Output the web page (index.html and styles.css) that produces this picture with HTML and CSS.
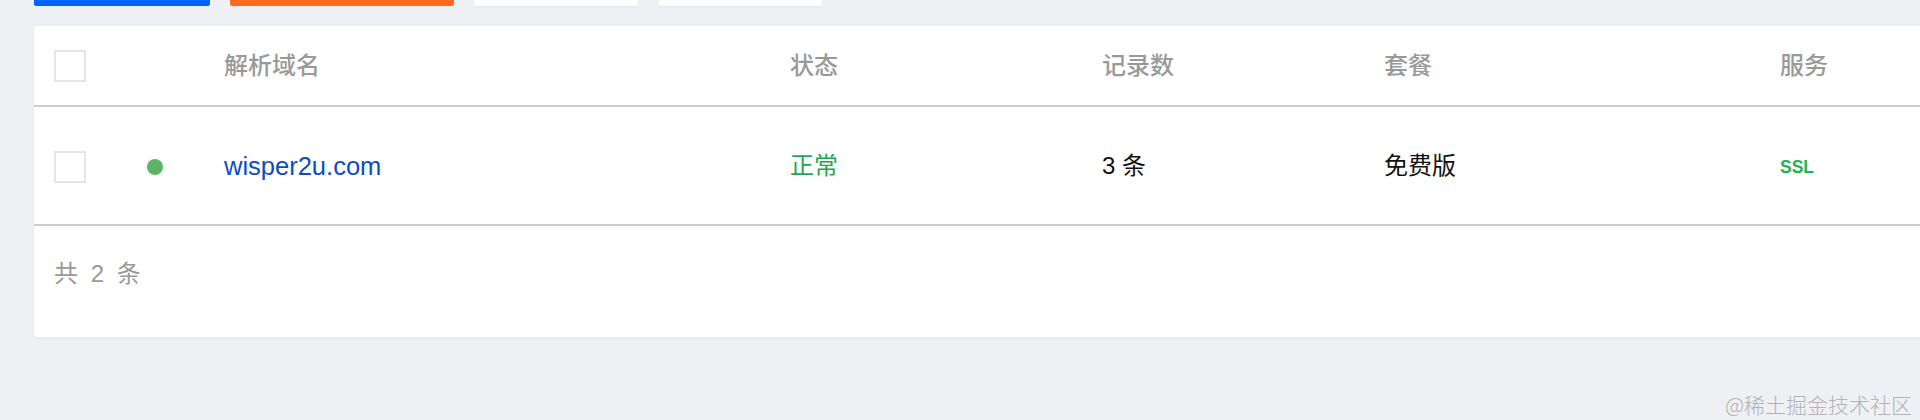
FILE: index.html
```html
<!DOCTYPE html>
<html lang="zh-CN">
<head>
<meta charset="utf-8">
<title>域名解析列表</title>
<link rel="stylesheet" href="styles.css">
</head>
<body>
<div class="page">
  <div class="toolbar">
    <button class="btn btn-primary"></button>
    <button class="btn btn-warn"></button>
    <button class="btn btn-plain"></button>
    <button class="btn btn-plain"></button>
  </div>
  <div class="card">
    <div class="row head">
      <div class="cell"><span class="checkbox"></span></div>
      <div class="cell"></div>
      <div class="cell">解析域名</div>
      <div class="cell">状态</div>
      <div class="cell">记录数</div>
      <div class="cell">套餐</div>
      <div class="cell">服务</div>
    </div>
    <div class="row body">
      <div class="cell"><span class="checkbox"></span></div>
      <div class="cell"><span class="dot"></span></div>
      <div class="cell"><a class="domain" href="#">wisper2u.com</a></div>
      <div class="cell status">正常</div>
      <div class="cell">3 条</div>
      <div class="cell">免费版</div>
      <div class="cell"><span class="ssl">SSL</span></div>
    </div>
    <div class="footer">共 2 条</div>
  </div>
</div>
<div class="watermark">@稀土掘金技术社区</div>
</body>
</html>
```
FILE: styles.css
```css
html, body {
  margin: 0;
  padding: 0;
}
body {
  background: #eff0f4;
  width: 1920px;
  height: 420px;
  overflow: hidden;
  position: relative;
  font-family: "Liberation Sans", "Noto Sans CJK SC", sans-serif;
}
.page {
  padding-left: 34px;
}
.toolbar {
  display: flex;
  gap: 20px;
  height: 6px;
  margin-bottom: 20px;
}
.btn {
  border: 0;
  padding: 0;
  height: 6px;
  border-radius: 0 0 2px 2px;
}
.btn-primary {
  width: 176px;
  background: #0064f5;
}
.btn-warn {
  width: 224px;
  background: #ff6a1c;
}
.btn-plain {
  width: 164px;
  background: #ffffff;
  box-shadow: 0 1px 2px rgba(0, 0, 0, 0.06);
}
.btn-plain + .btn-plain {
  margin-left: 1px;
  width: 163px;
}
.card {
  background: #ffffff;
  width: 1886px;
  border-radius: 3px 0 0 3px;
  box-shadow: 0 1px 3px rgba(0, 0, 0, 0.06);
  padding-left: 20px;
  box-sizing: border-box;
}
.row {
  display: grid;
  grid-template-columns: 93px 77px 566px 312px 282px 396px 1fr;
  align-items: center;
  border-bottom: 2px solid #cdcecf;
  margin-left: -20px;
  padding-left: 20px;
}
.head {
  height: 79px;
  color: #999999;
  font-size: 24px;
  font-weight: 500;
}
.body {
  height: 117px;
  color: #111111;
  font-size: 24px;
}
.cell {
  display: flex;
  align-items: center;
  line-height: 30px;
}
.checkbox {
  display: block;
  width: 28px;
  height: 28px;
  border: 2px solid #e4e5e8;
  background: #fff;
}
.body .checkbox {
  margin-top: 2px;
}
.dot {
  display: block;
  width: 16px;
  height: 16px;
  border-radius: 50%;
  background: #5cb566;
  margin-top: 2px;
}
.domain {
  color: #0a4dc2;
  text-decoration: none;
  font-size: 25.5px;
}
.status {
  color: #23a551;
}
.ssl {
  color: #22b45a;
  font-size: 17.5px;
  font-weight: 700;
  margin-top: 2px;
}
.footer {
  height: 111px;
  box-sizing: border-box;
  padding-top: 36px;
  line-height: 24px;
  font-size: 24px;
  color: #999999;
  letter-spacing: 3px;
}
.watermark {
  position: absolute;
  right: 8px;
  bottom: 5px;
  font-family: "Noto Sans CJK SC", sans-serif;
  font-size: 21px;
  color: #b3b3b6;
  font-weight: 300;
  line-height: 22px;
}
```
